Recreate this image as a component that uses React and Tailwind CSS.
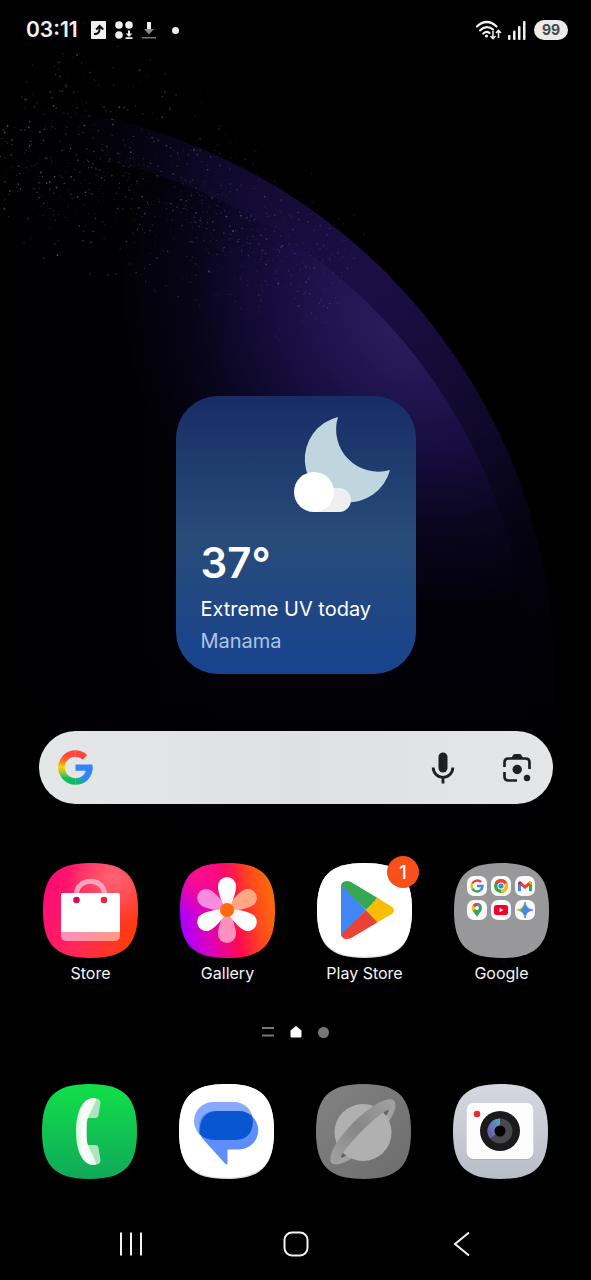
import { useState } from "react";

const SQUIRCLE =
  "M0 47.5C0 13 13 0 47.5 0S95 13 95 47.5 82 95 47.5 95 0 82 0 47.5Z";

// small seeded generator so the dust looks the same on every render
const makeDust = (count) => {
  let seed = 7;
  const rand = () => {
    seed = (seed * 16807) % 2147483647;
    return seed / 2147483647;
  };
  const dots = [];
  for (let i = 0; i < count; i++) {
    const t = rand();
    const spread = (rand() + rand() + rand() - 1.5) * (100 - 50 * t);
    dots.push({
      x: t * 345 - spread * 0.4,
      y: 138 + 80 * t + 70 * t * t + spread,
      r: 0.4 + rand() * 0.5,
      o: (0.1 + rand() * 0.45) * (1 - t * 0.65),
    });
  }
  return dots;
};

const dust = makeDust(1000);

const Wallpaper = () => (
  <svg
    className="absolute inset-0 -z-10 h-full w-full"
    viewBox="0 0 591 1280"
    preserveAspectRatio="xMidYMin slice"
    aria-hidden="true"
  >
    <defs>
      <radialGradient id="outerGlow" gradientUnits="userSpaceOnUse" cx="370" cy="270" r="400">
        <stop offset="0" stopColor="#1b0f47" />
        <stop offset="0.2" stopColor="#170d3d" />
        <stop offset="0.5" stopColor="#0e0829" />
        <stop offset="0.75" stopColor="#05030f" />
        <stop offset="1" stopColor="#020107" />
      </radialGradient>
      <linearGradient id="leftFade" gradientUnits="userSpaceOnUse" x1="0" y1="0" x2="230" y2="0">
        <stop offset="0" stopColor="#000" stopOpacity="0.900" />
        <stop offset="1" stopColor="#000" stopOpacity="0" />
      </linearGradient>
      <linearGradient id="bottomFade" gradientUnits="userSpaceOnUse" x1="0" y1="640" x2="0" y2="860">
        <stop offset="0" stopColor="#000" stopOpacity="0" />
        <stop offset="1" stopColor="#000" stopOpacity="0.900" />
      </linearGradient>
      <radialGradient
        id="innerGlow"
        gradientUnits="userSpaceOnUse"
        cx="0"
        cy="0"
        r="1"
        gradientTransform="translate(405 320) rotate(45) scale(310 265)"
      >
        <stop offset="0" stopColor="#2c1f62" />
        <stop offset="0.2" stopColor="#231754" />
        <stop offset="0.45" stopColor="#170d3f" />
        <stop offset="0.7" stopColor="#0a0620" />
        <stop offset="1" stopColor="#020108" />
      </radialGradient>
    </defs>
    <ellipse cx="-24" cy="680" rx="579" ry="577" fill="url(#outerGlow)" />
    <ellipse cx="-24" cy="680" rx="552" ry="535" fill="url(#innerGlow)" />
    <rect width="230" height="1280" fill="url(#leftFade)" />
    <rect y="640" width="591" height="640" fill="url(#bottomFade)" />
    {dust.map((d, i) => (
      <circle key={i} cx={d.x} cy={d.y} r={d.r} fill="#b4aed0" opacity={d.o} />
    ))}
  </svg>
);

const StatusBar = () => (
  <header className="flex h-[60px] items-center justify-between pl-[26px] pr-[23px]">
    <div className="flex items-center gap-[9px]">
      <time className="w-14 text-[21px] font-semibold leading-6 text-[#f2f2f2]">03:11</time>
      <svg width="15" height="18" viewBox="0 0 15 18" aria-hidden="true">
        <rect width="15" height="18" rx="1" fill="#f0f0f0" />
        <path
          d="M3 13Q8.500 13.500 8.500 8V6M5.200 8.500 8.700 5 12.200 8.500"
          fill="none"
          stroke="#111"
          strokeWidth="2"
        />
      </svg>
      <svg width="18" height="18" viewBox="0 0 18 18" fill="#f0f0f0" aria-hidden="true">
        <circle cx="4" cy="4" r="3.8" />
        <circle cx="14" cy="4" r="3.8" />
        <circle cx="4" cy="14" r="3.800" />
        <path d="M13 9.500h2v3h2.300L14 16l-3.300-3.500H13zM10.500 16.300h7V18h-7z" />
      </svg>
      <svg width="14" height="17" viewBox="0 0 14 17" aria-hidden="true">
        <path d="M5 0h4v7H5z" fill="#f0f0f0" />
        <path d="M2 7h10l-5 5.500z" fill="#8a8a8a" />
        <path d="M0 15h14v1.500H0z" fill="#777" />
      </svg>
      <span className="ml-[7px] size-[7px] rounded-full bg-[#f0f0f0]" />
    </div>

    <div className="flex items-center gap-[6px]">
      <svg width="27" height="20" viewBox="0 0 27 20" fill="none" stroke="#f0f0f0" aria-hidden="true">
        <path d="M2 6.500C8 0.500 15.500 0.500 21.500 6.500" strokeWidth="2.300" strokeLinecap="round" />
        <path d="M5.200 10.300C9 6.300 14.500 6.300 18 9.500" strokeWidth="2.300" strokeLinecap="round" />
        <path d="M8.300 13.500C10.500 11.500 12.800 11.500 14.500 13" strokeWidth="2.200" strokeLinecap="round" />
        <circle cx="11.500" cy="16" r="1.600" fill="#f0f0f0" stroke="none" />
        <path d="M18 11v7.500M15.500 16l2.500 2.700 2.500-2.700M23.500 18v-7.500M21 13l2.500-2.700L26 13" strokeWidth="1.500" />
      </svg>
      <svg width="18" height="19" viewBox="0 0 18 19" fill="#f0f0f0" aria-hidden="true">
        <rect x="0" y="14" width="2.500" height="5" rx="1" />
        <rect x="5" y="9.500" width="2.500" height="9.500" rx="1" />
        <rect x="10" y="5" width="2.500" height="14" rx="1" />
        <rect x="15" y="0" width="2.500" height="19" rx="1" />
      </svg>
      <span className="ml-[2px] flex h-5 w-[34px] items-center justify-center rounded-full bg-[#ebebeb] text-[14px] font-bold leading-5 text-[#4a4a4a]">
        99
      </span>
    </div>
  </header>
);

const WeatherWidget = () => (
  <section className="mx-auto mt-[336px] flex h-[278px] w-60 flex-col rounded-[42px] bg-linear-to-b from-[#182c66] via-[#284b78] to-[#18438f] pl-[25px] pr-6 pt-5 text-white">
    <svg className="self-end" width="100" height="97" viewBox="116 20 100 97" aria-hidden="true">
      <path d="M162 21A43.300 43.300 0 1 0 214 74A42.200 42.200 0 0 1 162 21Z" fill="#c0d6de" />
      <path d="M138 92H163A12 12 0 0 1 163 116H138Z" fill="#efeff1" />
      <circle cx="138" cy="96" r="20" fill="#fff" />
    </svg>
    <p className="mt-6 text-[42px] font-semibold leading-[52px]">37°</p>
    <p className="mt-1 whitespace-nowrap text-[20px] leading-8">Extreme UV today</p>
    <p className="text-[20px] leading-8 text-[#b0c2e6]">Manama</p>
  </section>
);

const GoogleMark = () => (
  <svg width="35" height="35" viewBox="0 0 35 35" fill="none" aria-hidden="true">
    <defs>
      <linearGradient id="gLeft" gradientUnits="userSpaceOnUse" x1="0" y1="2" x2="0" y2="33">
        <stop offset="0.12" stopColor="#ff4641" />
        <stop offset="0.3" stopColor="#ff7a1f" />
        <stop offset="0.48" stopColor="#fdd206" />
        <stop offset="0.65" stopColor="#a6cb1d" />
        <stop offset="0.85" stopColor="#0ebc5f" />
      </linearGradient>
      <linearGradient id="gRight" gradientUnits="userSpaceOnUse" x1="16" y1="32" x2="30" y2="20">
        <stop offset="0.1" stopColor="#0ebc5f" />
        <stop offset="0.6" stopColor="#3186ff" />
      </linearGradient>
    </defs>
    <path d="M17.500 31.500A14 14 0 0 1 17.500 3.500" stroke="url(#gLeft)" strokeWidth="6.500" />
    <path d="M17.300 3.500C21.500 3.500 24.500 5 27 7.300" stroke="#ff4641" strokeWidth="6.500" />
    <path d="M17.300 31.500C26 31.500 31.300 25.500 31.300 17.500" stroke="url(#gRight)" strokeWidth="6.500" />
    <path d="M17.500 14.500H34.500Q35 18 34.300 20.800H17.500Z" fill="#3186ff" />
  </svg>
);

const SearchBar = () => {
  const [query, setQuery] = useState("");

  return (
    <form
      onSubmit={(e) => e.preventDefault()}
      className="ml-[39px] mr-[38px] mt-[57px] flex h-[73px] items-center rounded-full bg-linear-to-r from-[#e4e7e8] via-[#dfe0e2] to-[#e4e6e7] pl-[19px] pr-[21px]"
    >
      <GoogleMark />
      <input
        type="search"
        aria-label="Search"
        value={query}
        onChange={(e) => setQuery(e.target.value)}
        className="h-full min-w-0 flex-1 bg-transparent px-4 text-[20px] text-[#202124] outline-none"
      />
      <button type="button" aria-label="Voice search" className="mr-[47px]">
        <svg width="24" height="32" viewBox="0 0 24 32" aria-hidden="true">
          <rect x="7.500" y="0.500" width="9" height="20" rx="4.500" fill="#1f2022" />
          <path d="M2.200 15.500a9.800 9.800 0 0 0 19.600 0M12 25v6.500" fill="none" stroke="#1f2022" strokeWidth="2.800" />
        </svg>
      </button>
      <button type="button" aria-label="Google Lens">
        <svg width="30" height="30" viewBox="0 0 30 30" fill="#1f2022" aria-hidden="true">
          <path
            d="M2.500 14V9.500Q2.500 5.500 6.500 5.500H23.500Q27.500 5.500 27.500 9.500V16M2.500 19V23.500Q2.500 27.500 6.500 27.500H15"
            fill="none"
            stroke="#1f2022"
            strokeWidth="2.700"
          />
          <path d="M9 5.500 11.500 1.500Q12 1 13 1H17.500Q18.500 1 19 1.500L21.500 5.500Z" />
          <circle cx="15.200" cy="16.500" r="4.700" />
          <circle cx="25" cy="25" r="3.200" />
        </svg>
      </button>
    </form>
  );
};

const IconBase = ({ children }) => (
  <svg className="size-[95px]" viewBox="0 0 95 95" aria-hidden="true">
    {children}
  </svg>
);

const StoreIcon = () => (
  <IconBase>
    <defs>
      <linearGradient id="storeBg" x1="0" y1="0.350" x2="1" y2="0.700">
        <stop offset="0" stopColor="#ff0a78" />
        <stop offset="0.5" stopColor="#ff2a55" />
        <stop offset="1" stopColor="#ff3c08" />
      </linearGradient>
      <radialGradient id="storeShine" cx="0.750" cy="0.150" r="0.500">
        <stop offset="0" stopColor="#ff6474" />
        <stop offset="1" stopColor="#ff6474" stopOpacity="0" />
      </radialGradient>
      <linearGradient id="storeStrip" x1="0" y1="0" x2="1" y2="0">
        <stop offset="0" stopColor="#ff8fc0" />
        <stop offset="1" stopColor="#ff9a80" />
      </linearGradient>
      <clipPath id="bagClip">
        <path d="M20 30H75Q77 30 77 32V72Q77 78 71 78H24Q18 78 18 72V32Q18 30 20 30Z" />
      </clipPath>
    </defs>
    <path d={SQUIRCLE} fill="url(#storeBg)" />
    <path d={SQUIRCLE} fill="url(#storeShine)" />
    <path d="M33.500 31C34 14 61 14 61.500 31" fill="none" stroke="#ffa3bd" strokeWidth="5" />
    <g clipPath="url(#bagClip)">
      <rect x="18" y="30" width="59" height="39" fill="#fff" />
      <rect x="18" y="69" width="59" height="9" fill="url(#storeStrip)" />
    </g>
    <circle cx="33.500" cy="37" r="3.300" fill="#d30a5c" />
    <circle cx="61" cy="37" r="3.300" fill="#e0264a" />
  </IconBase>
);

const PETAL = "M47 50C42 40 38 30 38 23A9 9 0 0 1 56 23C56 30 52 40 47 50Z";

const GalleryIcon = () => (
  <IconBase>
    <defs>
      <linearGradient id="galleryBg" x1="0" y1="0.600" x2="1" y2="0.400">
        <stop offset="0" stopColor="#a800ff" />
        <stop offset="0.220" stopColor="#d800c8" />
        <stop offset="0.550" stopColor="#ff0a50" />
        <stop offset="0.800" stopColor="#ff4a1c" />
        <stop offset="1" stopColor="#fa6c08" />
      </linearGradient>
      <radialGradient id="galleryPink" cx="0.200" cy="0.100" r="0.450">
        <stop offset="0" stopColor="#ff0f86" />
        <stop offset="1" stopColor="#ff0f86" stopOpacity="0" />
      </radialGradient>
      <linearGradient id="petalWhite" x1="0" y1="0" x2="0" y2="1">
        <stop offset="0.500" stopColor="#fff" />
        <stop offset="1" stopColor="#e6dcdc" />
      </linearGradient>
    </defs>
    <path d={SQUIRCLE} fill="url(#galleryBg)" />
    <path d={SQUIRCLE} fill="url(#galleryPink)" />
    <path d={PETAL} fill="#ffb48c" opacity="0.9" transform="rotate(60 47 47)" />
    <path d={PETAL} fill="#ffa0c8" opacity="0.9" transform="rotate(180 47 47)" />
    <path d={PETAL} fill="#fa9be4" opacity="0.9" transform="rotate(300 47 47)" />
    <path d={PETAL} fill="url(#petalWhite)" />
    <path d={PETAL} fill="url(#petalWhite)" transform="rotate(120 47 47)" />
    <path d={PETAL} fill="url(#petalWhite)" transform="rotate(240 47 47)" />
    <circle cx="47" cy="47" r="7" fill="#ff6a0a" />
  </IconBase>
);

const PlayIcon = () => (
  <IconBase>
    <defs>
      <clipPath id="playClip">
        <path d="M24 24Q24 18 30 18Q32 18 34 19L73 42.500Q77 45 77 47.500T73 52L34 75Q32 76 30 76Q24 76 24 70Z" />
      </clipPath>
    </defs>
    <path d={SQUIRCLE} fill="#e2e2e2" />
    <path d={SQUIRCLE} fill="#fff" transform="scale(1 0.985)" />
    <g clipPath="url(#playClip)">
      <path d="M20 16V78L49 47Z" fill="#4285f4" />
      <path d="M24 22 22 14H40L63 35 49 47Z" fill="#34a853" />
      <path d="M61 34 49 47 61 60 80 50V44Z" fill="#fbbc04" />
      <path d="M24 72 22 80H40L61 60 49 47Z" fill="#ea4335" />
    </g>
  </IconBase>
);

const GoogleFolderIcon = () => (
  <IconBase>
    <path d={SQUIRCLE} fill="#98989b" />
    {[13, 37, 61].map((x) =>
      [13, 37].map((y) => (
        <rect key={`${x}-${y}`} x={x} y={y} width="20" height="20" rx="7" fill="#fafafa" />
      ))
    )}
    {/* Google */}
    <g transform="translate(13 13)" fill="none" strokeWidth="2.400">
      <path d="M14 6.200A5.500 5.500 0 0 0 5.200 7.500" stroke="#ea4335" />
      <path d="M5.200 7.500A5.500 5.500 0 0 0 5.300 12.700" stroke="#fbbc04" />
      <path d="M5.300 12.700A5.500 5.500 0 0 0 13.500 14.300" stroke="#34a853" />
      <path d="M13.500 14.300Q15.500 12.500 15.500 10H10" stroke="#4285f4" />
    </g>
    {/* Chrome */}
    <g transform="translate(37 13)">
      <circle cx="10" cy="10" r="7" fill="#34a853" />
      <path d="M10 10 3.900 6.500A7 7 0 0 1 16.100 6.500Z" fill="#ea4335" />
      <path d="M10 10 16.100 6.500A7 7 0 0 1 10 17Z" fill="#fbbc04" />
      <circle cx="10" cy="10" r="3.500" fill="#fff" />
      <circle cx="10" cy="10" r="2.600" fill="#4285f4" />
    </g>
    {/* Gmail */}
    <g transform="translate(61 13)" fill="none" strokeWidth="3">
      <path d="M4.500 6V15.200" stroke="#4285f4" />
      <path d="M15.500 6V15.200" stroke="#34a853" />
      <path d="M4 6.300 10 11 16 6.300" stroke="#ea4335" />
      <path d="M14.500 7.500 16 6.300" stroke="#fbbc04" />
      <path d="M4 6.300 5.500 7.500" stroke="#c5221f" />
    </g>
    {/* Maps */}
    <g transform="translate(13 37)">
      <path d="M10 17.500C9 13.500 5 12 5 8A5 5 0 0 1 15 8C15 12 11 13.500 10 17.500Z" fill="#34a853" />
      <path d="M10 8 5.700 11A5 5 0 0 1 6 5Z" fill="#fbbc04" />
      <path d="M10 8 5.800 5.200A5 5 0 0 1 11 3.100Z" fill="#ea4335" />
      <path d="M10 8 11 3.100A5 5 0 0 1 14.600 6.200Z" fill="#4285f4" />
      <circle cx="10" cy="8" r="1.900" fill="#fff" />
    </g>
    {/* YouTube */}
    <g transform="translate(37 37)">
      <rect x="3" y="5" width="14" height="10" rx="2.500" fill="#f8002c" />
      <path d="M8.500 7.800v4.400L12.300 10z" fill="#fff" />
    </g>
    {/* Gemini */}
    <defs>
      <linearGradient id="gemini" x1="0.100" y1="0.300" x2="0.900" y2="0.600">
        <stop offset="0" stopColor="#f0b429" />
        <stop offset="0.300" stopColor="#4fa37a" />
        <stop offset="0.550" stopColor="#3f83f2" />
        <stop offset="1" stopColor="#5a7df5" />
      </linearGradient>
    </defs>
    <path
      transform="translate(61 37)"
      d="M10 2Q11 9 18 10Q11 11 10 18Q9 11 2 10Q9 9 10 2Z"
      fill="url(#gemini)"
      stroke="url(#gemini)"
      strokeWidth="0.800"
    />
  </IconBase>
);

const PhoneIcon = () => (
  <IconBase>
    <defs>
      <linearGradient id="phoneBg" x1="0" y1="0" x2="0" y2="1">
        <stop offset="0" stopColor="#12df48" />
        <stop offset="1" stopColor="#10a95a" />
      </linearGradient>
      <linearGradient id="handset" x1="0" y1="0" x2="1" y2="0">
        <stop offset="0" stopColor="#c9f2d5" />
        <stop offset="0.350" stopColor="#fff" />
        <stop offset="1" stopColor="#e4f7ea" />
      </linearGradient>
    </defs>
    <path d={SQUIRCLE} fill="url(#phoneBg)" />
    <path
      d="M50 14Q59 14 58.500 19L56.500 31Q56 34 53 34H45V61H53Q56 61 56.500 64L58.500 76Q59 81 50 81L42 70V25Z"
      fill="#b0e3bf"
    />
    <path
      d="M51 14Q56 14 53 19Q51 24 47 31Q44 38 44 47.500T47 64Q51 71 53 76Q56 81 51 81C39 80 34 64 34 47.500S39 15 51 14Z"
      fill="url(#handset)"
    />
  </IconBase>
);

const MessagesIcon = () => (
  <IconBase>
    <path d={SQUIRCLE} fill="#dcdcdc" />
    <path d={SQUIRCLE} fill="#fff" transform="scale(1 0.985)" />
    <rect x="15" y="18" width="59" height="38" rx="19" fill="#86a9fc" />
    <path
      d="M34.500 27H60A19.200 19.200 0 0 1 60 65.500H48.500V78.500Q48.500 82 46 79.500L23 54Q20 49 20 41.500A14.500 14.500 0 0 1 34.500 27Z"
      fill="#5f8dfb"
    />
    <path d="M39 27H60Q67 27 73 32Q74 35 74 38Q73 56 55 56H37Q26 56 20.500 50Q20 27 39 27Z" fill="#0957d0" />
  </IconBase>
);

const PlanetIcon = () => (
  <IconBase>
    <defs>
      <linearGradient id="planetBg" x1="0" y1="0" x2="1" y2="1">
        <stop offset="0" stopColor="#838383" />
        <stop offset="1" stopColor="#6c6c6c" />
      </linearGradient>
      <linearGradient id="ring" x1="0" y1="0" x2="1" y2="0">
        <stop offset="0" stopColor="#a2a2a2" />
        <stop offset="0.500" stopColor="#868686" />
        <stop offset="1" stopColor="#a2a2a2" />
      </linearGradient>
    </defs>
    <path d={SQUIRCLE} fill="url(#planetBg)" />
    <g transform="rotate(-45 47 48)">
      <ellipse cx="47" cy="48" rx="44" ry="13.500" fill="#a2a2a2" />
      <ellipse cx="47" cy="50" rx="34" ry="5" fill="#626262" />
    </g>
    <circle cx="47" cy="48.500" r="28.500" fill="#b0b0b0" />
    <path
      transform="rotate(-45 47 48)"
      d="M3 48A44 13.500 0 0 1 91 48Q90 53 81 51A34 4.500 0 0 0 13 51Q4 53 3 48Z"
      fill="url(#ring)"
    />
  </IconBase>
);

const CameraIcon = () => (
  <IconBase>
    <defs>
      <linearGradient id="cameraBg" x1="0" y1="0" x2="0" y2="1">
        <stop offset="0" stopColor="#d5d8e0" />
        <stop offset="1" stopColor="#b9bdc8" />
      </linearGradient>
      <linearGradient id="lensTint" x1="1" y1="0" x2="0" y2="1">
        <stop offset="0" stopColor="#35b5c4" />
        <stop offset="0.500" stopColor="#6a78b8" />
        <stop offset="1" stopColor="#69509a" />
      </linearGradient>
    </defs>
    <path d={SQUIRCLE} fill="url(#cameraBg)" />
    <rect x="13" y="20" width="68" height="56" rx="7" fill="#9a9eaa" opacity="0.500" />
    <rect x="13.500" y="19" width="67" height="56" rx="7" fill="#fdfdfd" />
    <circle cx="24" cy="30" r="3.300" fill="#ea2a30" />
    <circle cx="47" cy="47" r="20" fill="#1b1b1d" />
    <circle cx="47" cy="47" r="12.500" fill="#4a4a4e" />
    <path d="M47 47V34.500A12.500 12.500 0 0 0 37 54.500Z" fill="url(#lensTint)" />
    <circle cx="47" cy="47" r="5.500" fill="#020203" />
  </IconBase>
);

const apps = [
  { name: "Store", Icon: StoreIcon },
  { name: "Gallery", Icon: GalleryIcon },
  { name: "Play Store", Icon: PlayIcon, badge: 1 },
  { name: "Google", Icon: GoogleFolderIcon },
];

const dock = [
  { name: "Phone", Icon: PhoneIcon },
  { name: "Messages", Icon: MessagesIcon },
  { name: "Internet", Icon: PlanetIcon },
  { name: "Camera", Icon: CameraIcon },
];

const PageIndicator = () => (
  <div className="mt-[42px] flex h-3 items-center justify-center gap-4">
    <svg width="12" height="12" viewBox="0 0 12 12" fill="#777" aria-hidden="true">
      <path d="M0 1h12v2H0zM0 8.500h12v2H0z" />
    </svg>
    <svg width="12" height="12" viewBox="0 0 12 12" fill="#fff" aria-hidden="true">
      <path d="M6 0 11 4Q11.500 4.500 11.500 5V10.500Q11.500 11.500 10.500 11.500H1.500Q0.500 11.500 0.500 10.500V5Q0.500 4.500 1 4Z" />
    </svg>
    <span className="size-[11px] rounded-full bg-[#777]" />
  </div>
);

const NavBar = () => (
  <nav className="mt-auto flex h-[72px] items-center justify-between px-[119px]">
    <button type="button" aria-label="Recent apps">
      <svg width="24" height="24" viewBox="0 0 24 24" stroke="#f2f2f2" strokeWidth="2" aria-hidden="true">
        <path d="M2 0.500v23M12 0.500v23M22 0.500v23" />
      </svg>
    </button>
    <button type="button" aria-label="Home">
      <svg width="26" height="26" viewBox="0 0 26 26" aria-hidden="true">
        <rect x="1.500" y="1.500" width="23" height="23" rx="7.500" fill="none" stroke="#f2f2f2" strokeWidth="2" />
      </svg>
    </button>
    <button type="button" aria-label="Back">
      <svg width="24" height="26" viewBox="0 0 24 26" fill="none" stroke="#f2f2f2" strokeWidth="2" aria-hidden="true">
        <path d="M21 1.500 7 13 21 24.500" />
      </svg>
    </button>
  </nav>
);

const App = () => {
  return (
    <main className="relative isolate flex min-h-screen flex-col overflow-hidden bg-black font-['Inter','Roboto',sans-serif]">
      <Wallpaper />
      <StatusBar />
      <WeatherWidget />
      <SearchBar />

      <div className="mt-[59px] grid grid-cols-4 pl-[22px] pr-[21px]">
        {apps.map(({ name, Icon, badge }) => (
          <button key={name} type="button" className="flex flex-col items-center gap-1">
            <span className="relative">
              <Icon />
              {badge && (
                <span className="absolute -right-[7px] -top-[7px] flex size-8 items-center justify-center rounded-full bg-[#f9501a] text-[18px] font-medium text-white">
                  {badge}
                </span>
              )}
            </span>
            <span className="text-[16px] leading-[22px] text-[#f5f5f5]">{name}</span>
          </button>
        ))}
      </div>

      <PageIndicator />

      <div className="mt-[46px] grid grid-cols-4 pl-[21px] pr-[22px]">
        {dock.map(({ name, Icon }) => (
          <button key={name} type="button" aria-label={name} className="flex justify-center">
            <Icon />
          </button>
        ))}
      </div>

      <NavBar />
    </main>
  );
};

export default App;
